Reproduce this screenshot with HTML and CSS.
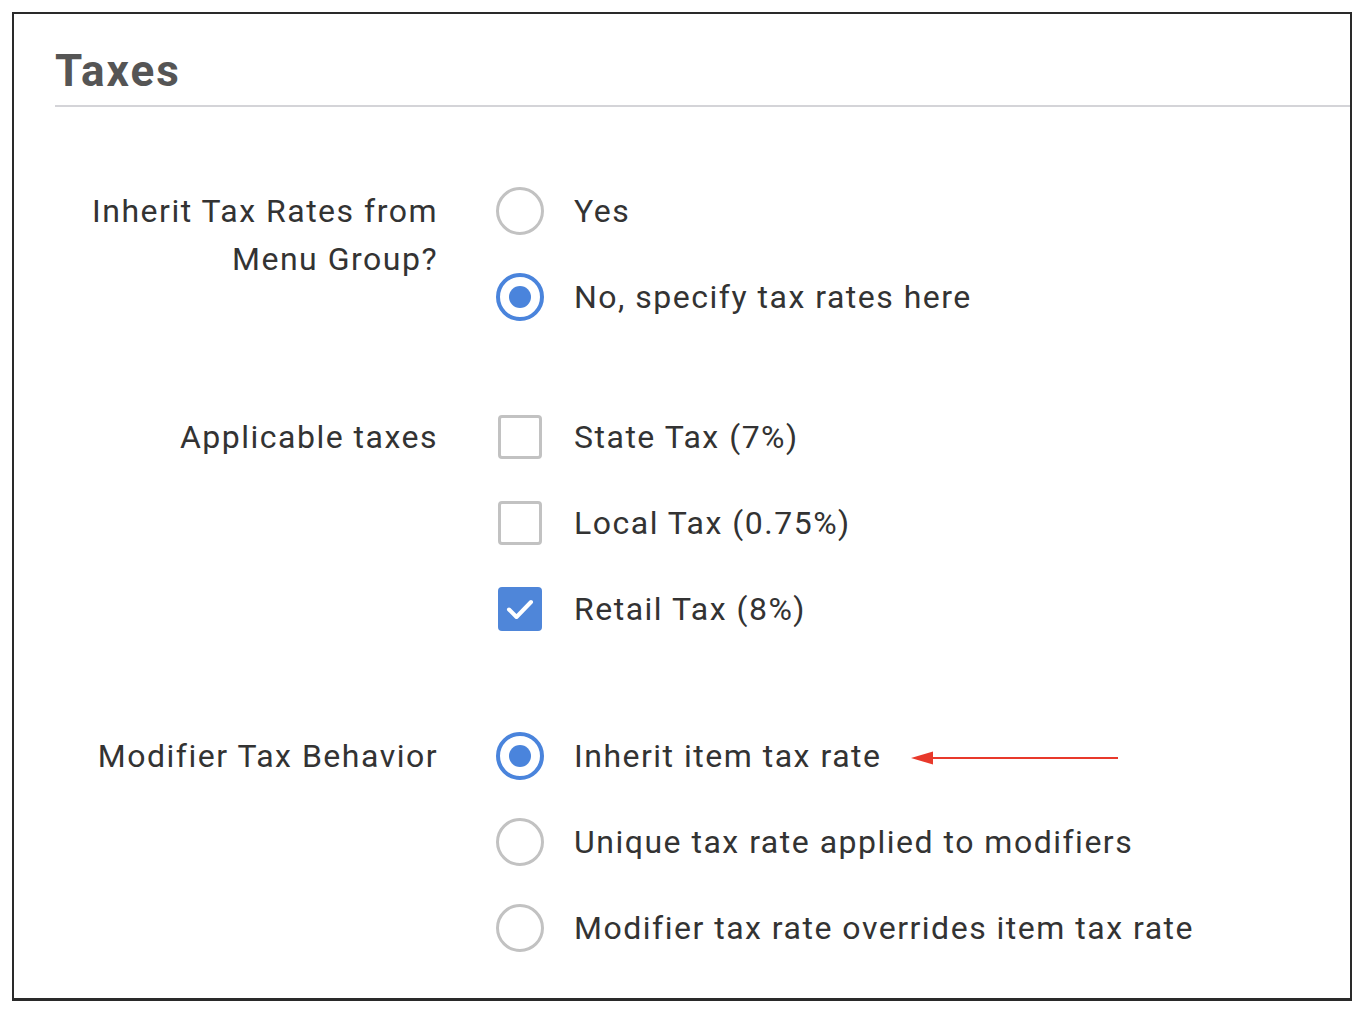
FILE: index.html
```html
<!DOCTYPE html>
<html>
<head>
<meta charset="utf-8">
<link rel="stylesheet" href="styles.css">
</head>
<body>
<div class="frame">
  <div class="header"><h1 class="title">Taxes</h1></div>
  <div class="group g1">
    <div class="label">Inherit Tax Rates from<br>Menu Group?</div>
    <div class="options">
      <div class="opt"><span class="ctl"><span class="radio"></span></span><span class="txt">Yes</span></div>
      <div class="opt"><span class="ctl"><span class="radio on"></span></span><span class="txt">No, specify tax rates here</span></div>
    </div>
  </div>
  <div class="group g2">
    <div class="label">Applicable taxes</div>
    <div class="options">
      <div class="opt"><span class="ctl"><span class="box"></span></span><span class="txt">State Tax (7%)</span></div>
      <div class="opt"><span class="ctl"><span class="box"></span></span><span class="txt">Local Tax (0.75%)</span></div>
      <div class="opt"><span class="ctl"><span class="box on"><svg viewBox="0 0 44 44" width="44" height="44"><path d="M11 22.5 L18.5 30 L33 15" fill="none" stroke="#fff" stroke-width="4" stroke-linecap="round" stroke-linejoin="round"/></svg></span></span><span class="txt">Retail Tax (8%)</span></div>
    </div>
  </div>
  <div class="group g3">
    <div class="label">Modifier Tax Behavior</div>
    <div class="options">
      <div class="opt"><span class="ctl"><span class="radio on"></span></span><span class="txt">Inherit item tax rate</span>
        <span class="arrow"><svg viewBox="0 0 210 16" width="210" height="16"><path d="M20 8 H207" stroke="#e8392b" stroke-width="2"/><path d="M0 8 L22 1.5 L22 14.5 Z" fill="#e8392b"/></svg></span>
      </div>
      <div class="opt"><span class="ctl"><span class="radio"></span></span><span class="txt">Unique tax rate applied to modifiers</span></div>
      <div class="opt"><span class="ctl"><span class="radio"></span></span><span class="txt">Modifier tax rate overrides item tax rate</span></div>
    </div>
  </div>
</div>
</body>
</html>
```

FILE: styles.css
```css
html, body {
  margin: 0;
  padding: 0;
  background: #fff;
}
body {
  font-family: Roboto, "Liberation Sans", sans-serif;
  color: #333;
}
.frame {
  margin: 12px 0 0 12px;
  width: 1340px;
  height: 989px;
  box-sizing: border-box;
  border: 2px solid #2a2a2a;
  border-bottom-width: 3px;
}
.header {
  margin-left: 41px;
  border-bottom: 2px solid #d4d4d8;
  height: 93px;
  box-sizing: border-box;
}
.title {
  margin: 0;
  padding-top: 32px;
  font-size: 44px;
  line-height: 50px;
  font-weight: 700;
  color: #555;
  letter-spacing: 2px;
}
.group {
  display: grid;
  grid-template-columns: 424px 1fr;
  column-gap: 58px;
}
.g1 { margin-top: 61px; }
.g2 { margin-top: 54px; }
.g3 { margin-top: 61px; }
.label {
  text-align: right;
  font-size: 32px;
  line-height: 48px;
  padding-top: 19px;
  letter-spacing: 1.5px;
  color: #333;
}
.options {
  display: flex;
  flex-direction: column;
}
.opt {
  height: 86px;
  display: flex;
  align-items: center;
  position: relative;
}
.ctl {
  width: 48px;
  height: 48px;
  display: flex;
  align-items: center;
  justify-content: center;
  margin-right: 30px;
  flex: none;
}
.txt {
  font-size: 32px;
  letter-spacing: 1.5px;
  color: #333;
}
.radio {
  width: 48px;
  height: 48px;
  box-sizing: border-box;
  border: 3px solid #c2c2c2;
  border-radius: 50%;
  display: flex;
  align-items: center;
  justify-content: center;
}
.radio.on {
  border: 4px solid #4a84dc;
}
.radio.on::after {
  content: "";
  width: 22px;
  height: 22px;
  border-radius: 50%;
  background: #4a84dc;
}
.box {
  width: 44px;
  height: 44px;
  box-sizing: border-box;
  border: 3px solid #c2c2c2;
  border-radius: 4px;
  display: block;
}
.box.on {
  border: none;
  background: #4f86d9;
}
.box svg { display: block; }
.arrow {
  margin-left: 30px;
  display: flex;
  align-items: center;
  margin-top: 4px;
}
.arrow svg { display: block; }
```
